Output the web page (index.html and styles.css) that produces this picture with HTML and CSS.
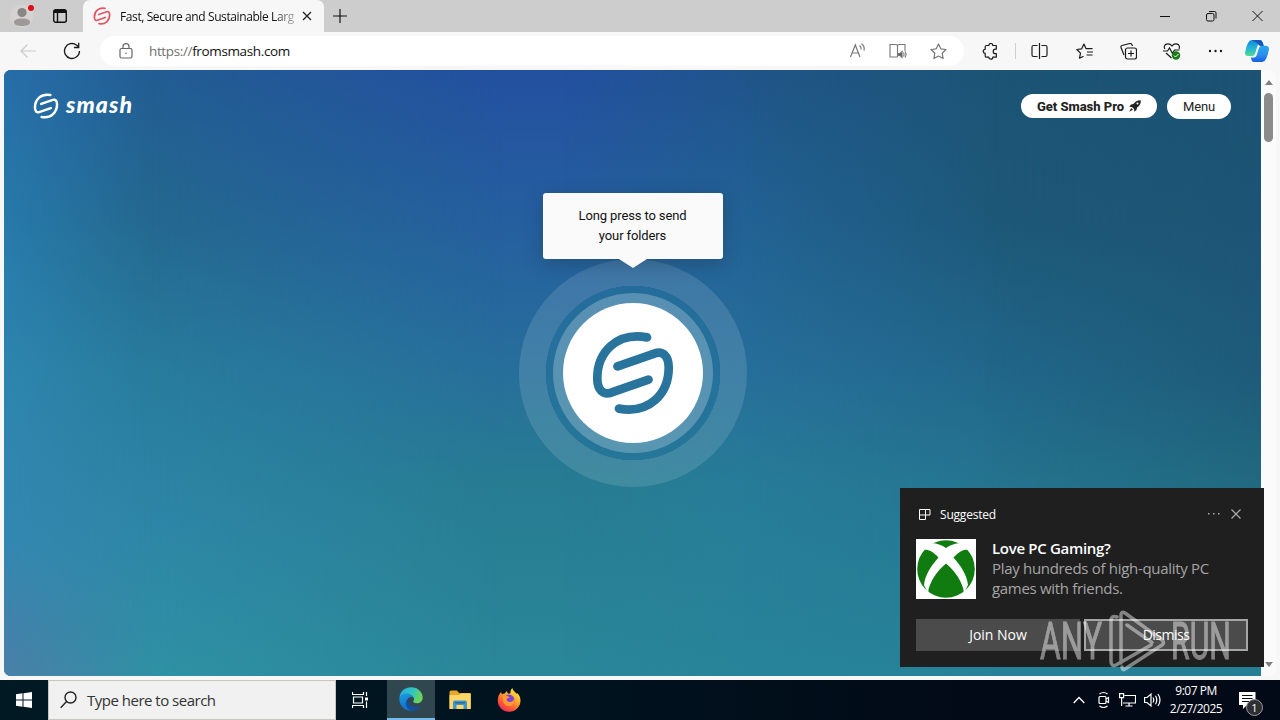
FILE: index.html
```html
<!DOCTYPE html>
<html lang="en">
<head>
  <meta charset="UTF-8" />
  <meta name="viewport" content="width=device-width, initial-scale=1.0" />
  <title>Fast, Secure and Sustainable Large File Transfer</title>
  <link rel="stylesheet" href="styles.css">
</head>
<body>
  <svg class="defs" width="0" height="0">
    <symbol id="smash-logo" viewBox="0 0 84 84">
      <g fill="none" stroke="currentColor" stroke-linecap="round" stroke-linejoin="round">
        <path d="M56 6.400C26 1 6 21 6.300 48C6.500 59 12 64 20 61.700L57.500 48.700" />
        <path d="M28 77.600C58 83 78 63 77.700 36C77.500 25 72 20 64 22.300L26.500 35.300" />
      </g>
    </symbol>
  </svg>

  <div class="tabstrip">
    <div class="profile">
      <svg width="24" height="24" viewBox="0 0 24 24"><circle cx="12" cy="12" r="11.500" fill="#d5d3d2" /><circle cx="12" cy="8.500" r="4.600" fill="#8b8683" /><path d="M4 18.500c0-3 3-4 8-4s8 1 8 4c0 2.500-4 3.500-8 3.500s-8-1-8-3.500z" fill="#9d9997" /></svg>
      <span class="dot"></span>
    </div>
    <svg class="workspaces" width="16" height="16" viewBox="0 0 16 16" fill="none" stroke="#111" stroke-width="1.400"><rect x="1.700" y="1.700" width="12.600" height="12.600" rx="2" /><path d="M2 3.500h12" stroke-width="3" /><path d="M5.500 5v9" /></svg>
    <div class="tab">
      <svg class="favicon" width="18" height="18"><use href="#smash-logo" /></svg>
      <span class="tab-title">Fast, Secure and Sustainable Larg</span>
      <svg width="10" height="10" viewBox="0 0 10 10" stroke="#222" stroke-width="1.300"><path d="M1 1l8 8M9 1l-8 8" /></svg>
    </div>
    <svg class="new-tab" width="14" height="14" viewBox="0 0 14 14" stroke="#111" stroke-width="1.200"><path d="M7 0v14M0 7h14" /></svg>
    <div class="window-buttons">
      <svg width="11" height="12" viewBox="0 0 11 12" stroke="#111"><path d="M0 6.500h10" /></svg>
      <svg width="11" height="12" viewBox="0 0 11 12" fill="none" stroke="#111"><rect x=".5" y="3.500" width="7.500" height="7.500" rx="1.500" /><path d="M3 1.500h5.500q1.500 0 1.500 1.500v5.500" /></svg>
      <svg width="11" height="12" viewBox="0 0 11 12" stroke="#111"><path d="M.5 1l10 10M10.500 1l-10 10" /></svg>
    </div>
  </div>

  <div class="toolbar">
    <svg class="back" width="17" height="14" viewBox="0 0 17 14" fill="none" stroke="#c9c9c9" stroke-width="1.200"><path d="M16 7H1M7.500 .5L1 7l6.500 6.500" /></svg>
    <svg class="reload" width="18" height="18" viewBox="0 0 18 18" fill="none" stroke="#1b1b1b" stroke-width="1.300"><path d="M16.500 9A7.500 7.500 0 1 1 13.500 3l2 1.700M15.700 .8v4.700H11" /></svg>
    <div class="address">
      <svg class="lock" width="14" height="16" viewBox="0 0 14 16" fill="none" stroke="#666" stroke-width="1.200"><rect x="1" y="5.500" width="12" height="9.500" rx="1.500" /><path d="M4 5.500V3.700a3 3 0 0 1 6 0v1.800" /><circle cx="7" cy="10.200" r=".8" fill="#666" stroke="none" /></svg>
      <span class="url"><span class="scheme">https://</span>fromsmash.com</span>
      <svg class="read" width="17" height="16" viewBox="0 0 17 16" fill="none" stroke="#777" stroke-width="1.200"><path d="M1.500 14L6.300 2l4.700 12M3.200 10h6.200M10.500 2.500q2 1.500 1.500 4M12.500 .8q3.500 2.500 2.500 6.700" /></svg>
      <svg class="reader" width="18" height="16" viewBox="0 0 18 16" fill="none" stroke="#777" stroke-width="1.100"><path d="M8.500 2v12M8.500 14H1V1.500h6q1.500 0 1.500 1.500 0-1.500 1.500-1.500h6V8" /><path d="M9.500 10.500h1.500l2-2v6l-2-2H9.500z" fill="#555" /><path d="M14.500 9.500q1 1.800 0 4M16 8.500q2 3 0 6" /></svg>
      <svg class="star" width="17" height="17" viewBox="0 0 17 17" fill="none" stroke="#777" stroke-width="1.200" stroke-linejoin="round"><path d="M8.500 1l2.300 4.800 5.200.7-3.800 3.700.9 5.300-4.600-2.500-4.600 2.500.9-5.300L1 6.500l5.200-.7z" /></svg>
    </div>
    <div class="actions">
      <svg class="puzzle" width="17" height="17" viewBox="0 0 17 17" fill="none" stroke="#1b1b1b" stroke-width="1.200" stroke-linejoin="round"><path d="M4.500 2.500h2.300a2 2 0 0 1 4 0h3.500v3.600h-.8a2.200 2.200 0 0 0 0 4.600h.8v3.500h-3.500a2 2 0 0 1-4 0H4.500q-1.300 0-1.300-1.300v-2.600a2 2 0 0 1 0-4V3.800q0-1.300 1.300-1.300z" /></svg>
      <span class="divider"></span>
      <svg class="split" width="17" height="16" viewBox="0 0 17 16" fill="none" stroke="#1b1b1b" stroke-width="1.200"><path d="M8.500 0v16M6.500 2.500h-4Q1 2.500 1 4v8q0 1.500 1.500 1.500h4M10.500 2.500h4Q16 2.500 16 4v8q0 1.500-1.500 1.500h-4" /></svg>
      <svg class="favs" width="17" height="16" viewBox="0 0 17 16" fill="none" stroke="#1b1b1b" stroke-width="1.200" stroke-linejoin="round"><path d="M10 5.800L8 1 5.700 5.800.8 6.500l3.700 3.700-1 5 4-2M10 5.700h6.500M11 9H17M10.500 12h6" /></svg>
      <svg class="collections" width="17" height="17" viewBox="0 0 17 17" fill="none" stroke="#1b1b1b" stroke-width="1.200"><rect x="5.500" y="5" width="11" height="11" rx="2" /><path d="M11 7.500v6M8 10.500h6M4 12L1 4.500Q.5 3 2 2.500l8-2Q11.500 0 12.500 3" /></svg>
      <svg class="health" width="18" height="17" viewBox="0 0 18 17" fill="none" stroke="#1b1b1b" stroke-width="1.200"><path d="M1.800 6C-.5 1 6-1 9 3c3-4 9-2 7 3M0 8h4.500l2-3 3 5.500 2-3.500h5M3 10l5.500 5" /><circle cx="13" cy="12.500" r="4.200" fill="#187c18" stroke="none" /><path d="M11 12.500l1.500 1.500 3-3" stroke="#fff" stroke-width="1" /></svg>
      <svg class="more" width="15" height="4" viewBox="0 0 15 4" fill="#1b1b1b"><circle cx="2" cy="2" r="1.200" /><circle cx="7.500" cy="2" r="1.200" /><circle cx="13" cy="2" r="1.200" /></svg>
      <svg class="copilot" width="24" height="24" viewBox="0 0 24 24">
        <defs>
          <linearGradient id="cp1" x1="0" y1="0" x2="0" y2="1"><stop offset="0" stop-color="#1685d8" /><stop offset=".5" stop-color="#22b4dd" /><stop offset="1" stop-color="#50dc8c" /></linearGradient>
          <linearGradient id="cp2" x1="0" y1="0" x2="0" y2="1"><stop offset="0" stop-color="#2aa7ef" /><stop offset=".55" stop-color="#2b8ff0" /><stop offset="1" stop-color="#145fe0" /></linearGradient>
        </defs>
        <path d="M7 1h8q2 0 2.700 2.500L18 5h-3q-2 0-2.600 2L10 15q-.8 2-3 2H3q-3 0-3-3.500Q1 8 3 4 4.300 1 7 1z" fill="url(#cp1)" />
        <path d="M7 1h8q2 0 2.700 2.500L19 7h-4l-3-3z" fill="#1359bd" />
        <path d="M17 23H9q-2 0-2.700-2.500L6 18.500h3q2 0 2.600-2L14 9q.8-2.200 3-2.200h4q3 0 3 3.500-1 5.700-3 9.700-1.300 3-4 3z" fill="url(#cp2)" />
      </svg>
    </div>
  </div>

  <div class="content">
    <main class="page">
      <div class="wash wash-mid-left"></div>
      <div class="wash wash-left"></div>
      <div class="wash wash-mid-right"></div>
      <div class="wash wash-right"></div>
      <div class="wash wash-edge"></div>
      <header class="site-header">
        <div class="brand">
          <svg class="brand-logo" width="26" height="26"><use href="#smash-logo" /></svg>
          <span>smash</span>
        </div>
        <nav>
          <a class="btn pro">Get Smash Pro
            <svg width="12" height="12" viewBox="0 0 12 12" fill="#222"><path d="M11.800.2Q7 0 4.500 4L2 4.500.3 6.800l2.600.1 2.200 2.200.1 2.600L7.500 10 8 7.500Q12 5 11.800.2z" /><circle cx="8.500" cy="3.500" r="1" fill="#fff" /><path d="M2.200 8L.2 11.800 4 9.800z" /></svg>
          </a>
          <a class="btn menu">Menu</a>
        </nav>
      </header>
      <section class="hero">
        <div class="tooltip">Long press to send<br>your folders</div>
        <div class="ring-outer">
          <div class="ring-gap">
            <div class="ring-inner">
              <button class="send"><svg width="84" height="84"><use href="#smash-logo" /></svg></button>
            </div>
          </div>
        </div>
      </section>
    </main>
    <div class="scrollbar">
      <span class="arrow up"></span>
      <span class="thumb"></span>
      <span class="arrow down"></span>
    </div>
  </div>

  <div class="taskbar">
    <div class="start">
      <svg width="16" height="16" viewBox="0 0 16 16" fill="#fff"><path d="M0 2.200L6.500 1.300V7.500H0zM7.500 1.200L16 0v7.500H7.500zM0 8.500h6.500v6.200L0 13.800zM7.500 8.500H16V16l-8.500-1.200z" /></svg>
    </div>
    <div class="search">
      <svg width="17" height="18" viewBox="0 0 17 18" fill="none" stroke="#222" stroke-width="1.400"><circle cx="10.500" cy="6.500" r="5.500" /><path d="M6.600 10.600L.7 16.800" /></svg>
      <span>Type here to search</span>
    </div>
    <div class="task">
      <svg width="17" height="16" viewBox="0 0 17 16" fill="none" stroke="#fff" stroke-width="1.200"><path d="M.5 0v2.500h11V0M.5 16v-2.500h11V16M1.500 5h9v6h-9zM14.500 0v4M14.500 9.500V16" /><path d="M13 5.500h3v3h-3z" fill="#fff" stroke="none" /></svg>
    </div>
    <div class="task active">
      <svg width="24" height="24" viewBox="0 0 24 24">
        <defs>
          <linearGradient id="edge1" x1="0" y1="0" x2="1" y2=".4"><stop offset="0" stop-color="#27a5e5" /><stop offset=".55" stop-color="#2fc5c5" /><stop offset="1" stop-color="#6bd45a" /></linearGradient>
          <linearGradient id="edge2" x1="0" y1="0" x2=".5" y2="1"><stop offset="0" stop-color="#1b9ce2" /><stop offset="1" stop-color="#1469c7" /></linearGradient>
        </defs>
        <path d="M.5 10C1.500 4 6 .3 12 .3c7 0 11.700 5 11.700 10 0 4-2.700 6-6 6-3 0-4-1.300-3.300-2.300 2-3-1-6-4.400-6C6 8 3 9 .5 10z" fill="url(#edge1)" />
        <path d="M.3 12C.3 8.500 3.500 6.500 7 6.500c4 0 7.500 2 7.700 5-1-2-4-2-5.500 0-2.500 4 1 9 6.500 9 2.500 0 4-.8 5.300-1.500C19 22 16 23.700 12 23.700 5.500 23.700.3 18.500.3 12z" fill="url(#edge2)" />
        <path d="M9.200 11.500C4 16 8 23 13 23.600c4 0 7-2 8.500-4.800-2 1-4 1.300-6 1-4-.6-7-4-6.300-8.300z" fill="#124f9d" />
      </svg>
    </div>
    <div class="task">
      <svg width="22" height="20" viewBox="0 0 22 20"><path d="M.5 2Q.5.500 2 .5h6L10 3h11q.7 0 .7 1v15H.5z" fill="#e8a62c" /><path d="M.5 5h10l2-1.500h9.200V19H.5z" fill="#ffd766" /><path d="M4 19v-7q0-1.500 1.500-1.500h11Q18 10.500 18 12v7h-3.500v-4h-7v4z" fill="#3f95cf" /><path d="M6 12h10v1.500H6z" fill="#2a6b9d" /></svg>
    </div>
    <div class="task firefox">
      <svg width="24" height="24" viewBox="0 0 24 24">
        <defs><linearGradient id="fox" x1=".85" y1="0" x2=".2" y2="1"><stop offset="0" stop-color="#fff04a" /><stop offset=".35" stop-color="#ffb42e" /><stop offset=".7" stop-color="#ff5a36" /><stop offset="1" stop-color="#ee255c" /></linearGradient></defs>
        <path d="M4 4q.5 1.500 1 2.200Q6 5.500 7.700 5.500 8.500 4 10 3q0 2 1.500 2.800 1-.3 2-.8Q13 2 15.500 0c0 2.500 2.500 3.500 4 5.500q.8 1 .8-.5C22.500 7 23.500 10 23.500 12.500A11.300 11.300 0 0 1 .8 12.500C.8 9 2 6 4 4z" fill="url(#fox)" />
        <circle cx="12" cy="12" r="5.400" fill="#8043d7" />
        <path d="M5.500 8q4-1.500 7 1.200L9.500 11q0 3 3.500 3 3 0 4-3 1 6-4.500 7Q7 18 6 13z" fill="#ff9a2e" />
      </svg>
    </div>
    <div class="tray">
      <svg width="12" height="8" viewBox="0 0 12 8" fill="none" stroke="#fff" stroke-width="1.300"><path d="M.7 7L6 1.500 11.300 7" /></svg>
      <svg width="14" height="18" viewBox="0 0 14 18" fill="none" stroke="#fff" stroke-width="1.200"><rect x="2" y="5.500" width="7" height="7" rx="1" /><path d="M9 8l2.500-1.500v5L9 10M2.500 3q4-3 8 0M2.500 15q4 3 8 0" /></svg>
      <svg width="17" height="14" viewBox="0 0 17 14" fill="none" stroke="#fff" stroke-width="1.200"><path d="M5.500 2.500h11v7.500H4M10 10v3M6.500 13h7M.6.600h4v4h-4zM2.600 4.600V13" /></svg>
      <svg width="17" height="16" viewBox="0 0 17 16" fill="none" stroke="#fff" stroke-width="1.200"><path d="M.6 5.500h2.500L7 2v12l-4-3.500H.6zM9 5.500q1.500 2.500 0 5M11.500 3.700q2.500 4.300 0 8.600M14 2q4 6 0 12" /></svg>
      <div class="clock">9:07 PM<br>2/27/2025</div>
      <div class="action-center">
        <svg width="17" height="17" viewBox="0 0 17 17"><path d="M0 0h16.500v13H8l-4 4v-4H0z" fill="#fff" /><path d="M3 3.500h10.500M3 6.500h10.500M3 9.500h7" stroke="#020b17" stroke-width="1.200" /></svg>
        <span class="count">1</span>
      </div>
    </div>
  </div>

  <div class="toast">
    <div class="toast-head">
      <svg width="12" height="12" viewBox="0 0 12 12" fill="none" stroke="#fff"><path d="M.5 1.500h10.500v5.500H.5zM.5 7v4.500h6V1.500" /></svg>
      <span>Suggested</span>
      <svg class="toast-more" width="12" height="4" viewBox="0 0 12 4" fill="#aaa"><path d="M0 1h1.500v1.500H0zM5 1h1.500v1.500H5zM10 1h1.500v1.500H10z" /></svg>
      <svg width="10" height="10" viewBox="0 0 10 10" stroke="#aaa" stroke-width="1.200"><path d="M.5.500l9 9M9.500.500l-9 9" /></svg>
    </div>
    <div class="toast-body">
      <svg width="60" height="60" viewBox="0 0 60 60">
        <path d="M0 0h60v60H0z" fill="#fff" />
        <circle cx="30" cy="30" r="28.800" fill="#107c10" />
        <path d="M15 4.500Q21 3.500 30 9 39 3.500 45 4.500L52 11Q46 9 37.500 18.500C45 27 51 36 52 46L48 54C47 43 38 31 30 24.500 22 31 13 43 12 54L8 46C9 36 15 27 22.500 18.500 14 9 8 11 8 11z" fill="#fff" />
      </svg>
      <div class="toast-text">
        <strong>Love PC Gaming?</strong>
        <p>Play hundreds of high-quality PC<br>games with friends.</p>
      </div>
    </div>
    <div class="toast-buttons">
      <button>Join Now</button>
      <button class="focused">Dismiss</button>
    </div>
  </div>

  <svg class="watermark" width="196" height="64" viewBox="0 0 196 64">
    <text x="3" y="50" textLength="62" lengthAdjust="spacingAndGlyphs">ANY</text>
    <text x="134" y="50" textLength="60" lengthAdjust="spacingAndGlyphs">RUN</text>
    <path d="M80 8q-6-2-6 4v40q0 6 5 4l35-20M84 54V6q0-4 4-2l37 27q3 3 0 5L88 60q-3 2-3-2M90 16l25 17.500" />
  </svg>
</body>
</html>
```
FILE: styles.css
```css
* {
  box-sizing: border-box;
}

body {
  margin: 0;
  width: 1280px;
  height: 720px;
  overflow: hidden;
  display: flex;
  flex-direction: column;
  position: relative;
  background: #f7f7f7;
  font-family: "Open Sans", "Noto Sans", sans-serif;
}

svg {
  flex: none;
  display: block;
}

button {
  font: inherit;
  border: 0;
  padding: 0;
}

.defs {
  position: absolute;
}

/* Tabs */
.tabstrip {
  height: 32px;
  flex: none;
  display: flex;
  align-items: center;
  background: #cdcdcd;
  padding-left: 10px;
}

.profile {
  position: relative;
  width: 24px;
  margin-right: 18px;
}

.dot {
  position: absolute;
  top: 1px;
  right: 0;
  width: 6px;
  height: 6px;
  border-radius: 50%;
  background: #e30b17;
}

.tab {
  width: 241px;
  height: 32px;
  margin-left: 15px;
  padding: 0 11px 0 10px;
  display: flex;
  align-items: center;
  background: #f7f7f7;
  border-radius: 7px 7px 0 0;
}

.favicon {
  color: #e25563;
  stroke-width: 8;
}

.tab-title {
  width: 174px;
  margin: 0 8px 0 9px;
  white-space: nowrap;
  font-size: 12px;
  letter-spacing: -0.4px;
  color: #111;
  -webkit-mask-image: linear-gradient(to right, #000 88%, rgba(0, 0, 0, 0.3));
  mask-image: linear-gradient(to right, #000 88%, rgba(0, 0, 0, 0.3));
}

.new-tab {
  margin-left: 9px;
}

.window-buttons {
  margin-left: auto;
  padding-right: 17px;
  display: flex;
  gap: 35px;
}

/* Toolbar */
.toolbar {
  height: 38px;
  flex: none;
  display: flex;
  align-items: center;
  padding-left: 20px;
}

.reload {
  margin-left: 26px;
}

.address {
  width: 864px;
  height: 30px;
  margin-left: 19px;
  padding: 0 17px 0 19px;
  display: flex;
  align-items: center;
  background: #fff;
  border-radius: 15px;
}

.url {
  margin: 0 auto 0 16px;
  font-size: 13.5px;
  letter-spacing: -0.36px;
  color: #111;
}

.scheme {
  color: #707070;
}

.reader {
  margin-left: 23px;
}

.star {
  margin-left: 23px;
}

.actions {
  display: flex;
  align-items: center;
  margin-left: 18px;
}

.divider {
  width: 1px;
  height: 16px;
  background: #cfcfcf;
  margin: 0 15px 0 16px;
}

.favs {
  margin-left: 28px;
}

.collections {
  margin-left: 27px;
}

.health {
  margin-left: 26px;
}

.more {
  margin-left: 27px;
}

.copilot {
  margin-left: 22px;
}

/* Web page */
.content {
  height: 606px;
  flex: none;
  display: flex;
  margin: 0 4px 4px;
  background: #fbfbfb;
  border-radius: 7px;
  overflow: hidden;
}

.page {
  position: relative;
  z-index: 0;
  width: 1257px;
  background: linear-gradient(#2350a0, #255f9f 25%, #276f9b 50%, #277c92 68%, #2a8799);
}

/* Colour columns that blend into each other across the page */
.wash {
  position: absolute;
  inset: 0;
  z-index: -1;
}

.wash-mid-left {
  background: linear-gradient(#225c92, #24688f 25%, #287c9c 50%, #2d86a6 75%, #2f91a4);
  -webkit-mask-image: linear-gradient(to right, #000 150px, transparent 500px);
  mask-image: linear-gradient(to right, #000 150px, transparent 500px);
}

.wash-left {
  background: linear-gradient(#276ea8, #277aaa 25%, #2d85ae 50%, #3387b0 78%, #4b7fa8);
  -webkit-mask-image: linear-gradient(to right, #000, transparent 150px);
  mask-image: linear-gradient(to right, #000, transparent 150px);
}

.wash-mid-right {
  background: linear-gradient(#1f5588, #226294 25%, #276f9b 50%, #277c98 68%, #27849a);
  -webkit-mask-image: linear-gradient(to right, transparent 560px, #000 760px);
  mask-image: linear-gradient(to right, transparent 560px, #000 760px);
}

.wash-right {
  background: linear-gradient(#1c5475, #1d5878 25%, #21678a 50%, #257590 70%, #268299);
  -webkit-mask-image: linear-gradient(to right, transparent 740px, #000 1000px);
  mask-image: linear-gradient(to right, transparent 740px, #000 1000px);
}

.wash-edge {
  background: linear-gradient(#1c5272, #1d5474 25%, #1e5b79 50%, #21697f 68%, #257f94);
  -webkit-mask-image: linear-gradient(to right, transparent 980px, #000 1257px);
  mask-image: linear-gradient(to right, transparent 980px, #000 1257px);
}

.site-header {
  display: flex;
  justify-content: space-between;
  padding: 22px 30px 0 29px;
  height: 53px;
}

.brand {
  display: flex;
  align-items: center;
  gap: 7px;
  height: 27px;
  color: #fff;
  font: italic 900 23px/27px Lato, sans-serif;
  letter-spacing: 1.1px;
}

.brand-logo {
  stroke-width: 8;
}

.brand span {
  margin-top: -3px;
}

nav {
  display: flex;
  gap: 10px;
  padding-top: 2px;
}

.btn {
  height: 24px;
  display: flex;
  align-items: center;
  justify-content: center;
  gap: 5px;
  border-radius: 13px;
  background: #fff;
  color: #222;
  font: 13px Roboto, sans-serif;
}

.pro {
  width: 136px;
  font-weight: 800;
  letter-spacing: -0.02px;
}

.menu {
  width: 64px;
  height: 25px;
  letter-spacing: -0.1px;
}

.hero {
  display: flex;
  flex-direction: column;
  align-items: center;
  padding-top: 70px;
}

.tooltip {
  position: relative;
  z-index: 1;
  width: 180px;
  height: 66px;
  padding-top: 13px;
  border-radius: 3px;
  background: #fafafa;
  box-shadow: 0 5px 18px rgba(30, 50, 70, 0.35);
  color: #111;
  font: 13px/20px Roboto, sans-serif;
  letter-spacing: -0.12px;
  text-align: center;
}

.tooltip::after {
  content: "";
  position: absolute;
  left: 76px;
  top: 66px;
  border: 14px solid transparent;
  border-top: 9px solid #fafafa;
  border-bottom: 0;
}

.ring-outer,
.ring-gap,
.ring-inner,
.send {
  display: flex;
  align-items: center;
  justify-content: center;
  border-radius: 50%;
}

.ring-outer {
  width: 228px;
  height: 228px;
  background: radial-gradient(circle, transparent 87px, rgba(255, 255, 255, 0.12) 87.500px);
}

.ring-gap {
  width: 174px;
  height: 174px;
  background: rgba(35, 115, 155, 0.5);
}

.ring-inner {
  width: 160px;
  height: 160px;
  background: rgba(255, 255, 255, 0.24);
}

.send {
  width: 140px;
  height: 140px;
  background: #fff;
  color: #28749c;
  stroke-width: 8.7;
}

.scrollbar {
  flex: 1;
  display: flex;
  flex-direction: column;
  align-items: center;
  padding: 10px 0 9px;
}

.arrow {
  border: 4.5px solid transparent;
}

.up {
  border-top: 0;
  border-bottom: 5px solid #808080;
}

.down {
  border-bottom: 0;
  border-top: 5px solid #808080;
  margin-top: auto;
}

.thumb {
  width: 9px;
  height: 49px;
  margin-top: 8px;
  border-radius: 5px;
  background: #8b8b8b;
}

/* Taskbar */
.taskbar {
  height: 40px;
  flex: none;
  display: flex;
  background: linear-gradient(to right, #001923, #00131f 45%, #020a17 75%);
  color: #fff;
}

.start {
  width: 48px;
  display: flex;
  align-items: center;
  justify-content: center;
}

.search {
  width: 288px;
  display: flex;
  align-items: center;
  gap: 10px;
  padding-left: 11px;
  background: #f1f1f1;
  border: 1px solid #c8c4c0;
  color: #333;
  font-size: 15px;
  letter-spacing: -0.5px;
}

.task {
  width: 48px;
  display: flex;
  align-items: center;
  justify-content: center;
}

.task + .task {
  margin-left: 1px;
}

.task + .active {
  margin-left: 3px;
  background: #31474f;
  border-bottom: 2px solid #76b9ed;
}

.tray {
  margin-left: auto;
  display: flex;
  align-items: center;
  gap: 8px;
  padding-right: 17px;
}

.tray > :first-child {
  margin-right: 4px;
}

.clock {
  width: 54px;
  font-size: 12px;
  line-height: 18px;
  letter-spacing: -0.5px;
  text-align: center;
  white-space: nowrap;
}

.action-center {
  position: relative;
  width: 24px;
  margin-left: 8px;
}

.count {
  position: absolute;
  left: 7px;
  top: 7px;
  width: 17px;
  height: 17px;
  border: 1px solid #9a9a9a;
  border-radius: 50%;
  background: #2d2f33;
  font-size: 11px;
  line-height: 15px;
  text-align: center;
}

/* Notification */
.toast {
  position: absolute;
  left: 900px;
  top: 488px;
  width: 364px;
  height: 179px;
  padding: 16px;
  background: #1f1f1f;
  color: #fff;
}

.toast-head {
  height: 20px;
  display: flex;
  align-items: center;
  padding: 0 7px 0 3px;
  font-size: 12px;
  letter-spacing: -0.2px;
}

.toast-head span {
  margin: 0 auto 0 9px;
}

.toast-more {
  margin-right: 11px;
}

.toast-body {
  display: flex;
  gap: 16px;
  margin-top: 15px;
}

.toast-text {
  margin-top: -1px;
  font-size: 15px;
  line-height: 20px;
  letter-spacing: -0.31px;
  white-space: nowrap;
}

.toast-text strong {
  font-weight: 600;
}

.toast-text p {
  margin: 0;
  color: #a5a5a5;
}

.toast-buttons {
  display: flex;
  gap: 4px;
  margin-top: 20px;
}

.toast-buttons button {
  width: 164px;
  height: 32px;
  padding-bottom: 1px;
  background: #4b4b4b;
  color: #fff;
  font-size: 14px;
}

.toast-buttons .focused {
  border: 2px solid #a5a5a5;
  letter-spacing: -0.5px;
}

.watermark {
  position: absolute;
  left: 1037px;
  top: 609px;
  opacity: 0.45;
}

.watermark text {
  font: 400 51px Roboto, sans-serif;
  fill: #fff;
  stroke: #fff;
  stroke-width: 1;
}

.watermark path {
  fill: none;
  stroke: #fff;
  stroke-width: 3.5;
  stroke-linejoin: round;
  stroke-linecap: round;
}
```
